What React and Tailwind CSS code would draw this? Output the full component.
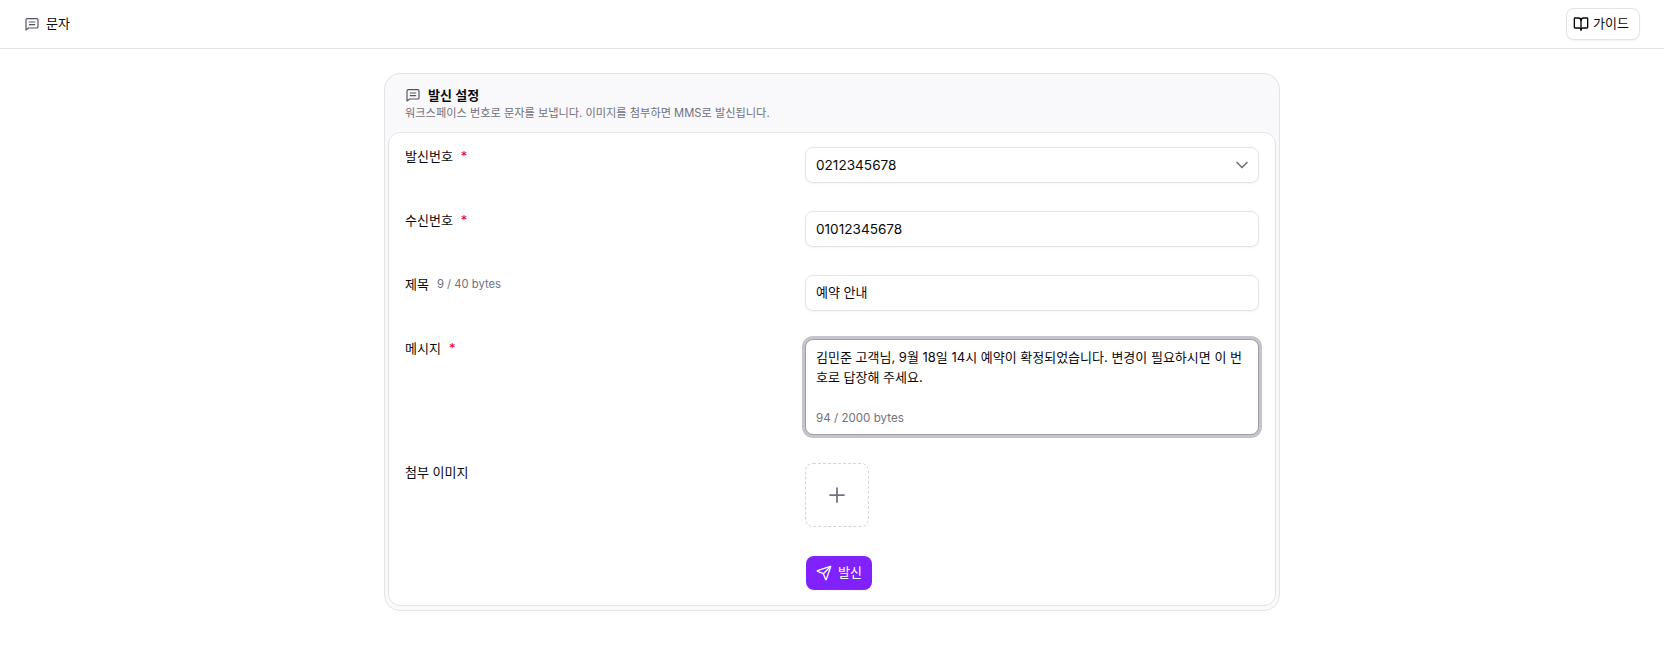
import { BookOpen, ChevronDown, Plus, Send } from "lucide-react";

const font = "font-['Inter','Noto_Sans_CJK_KR',sans-serif]";

function MessageIcon() {
  return (
    <svg viewBox="0 0 24 24" fill="none" stroke="currentColor" strokeWidth="1.75" strokeLinecap="round" strokeLinejoin="round" className="size-4 text-[#52525c]">
      <path d="M21 16a2 2 0 0 1-2 2H7l-4 3V6a2 2 0 0 1 2-2h14a2 2 0 0 1 2 2z" />
      <path d="M8 9h8" />
      <path d="M8 13h8" />
    </svg>
  );
}

function Field({ label, required, hint, children }) {
  return (
    <div className="grid grid-cols-[400px_454px] items-start">
      <div className="flex items-center text-[13px] leading-[18px] text-[#09090b]">
        <span>{label}</span>
        {required && <span className="ml-2 text-[#e7000b]">*</span>}
        {hint && <span className="ml-2 text-[11.25px] text-[#71717b]">{hint}</span>}
      </div>
      {children}
    </div>
  );
}

function TextBox({ children }) {
  return (
    <div className="flex h-9 items-center justify-between rounded-lg border border-[#e4e4e7] bg-white px-2.5 text-[13.6px] text-[#09090b] shadow-[0_1px_2px_rgba(0,0,0,0.05)]">
      {children}
    </div>
  );
}

export default function App() {
  return (
    <div className={`${font} min-h-[660px] bg-white`}>
      <header className="flex h-[49px] items-center justify-between border-b border-[#e4e4e7] px-6">
        <div className="flex items-center gap-1.5 text-[13px] text-[#09090b]">
          <MessageIcon />
          <span>문자</span>
        </div>
        <button className="flex h-8 items-center gap-1 rounded-lg border border-[#e4e4e7] bg-white pl-1.5 pr-2.5 text-[13px] text-[#09090b] shadow-[0_1px_2px_rgba(0,0,0,0.05)]">
          <BookOpen className="size-4" strokeWidth={2} />
          가이드
        </button>
      </header>

      <main className="flex justify-center pt-6">
        <section className="w-[896px] rounded-2xl border border-[#e4e4e7] bg-[#f9f9fb] px-[3px] pb-1">
          <div className="px-[17px] pb-[11px] pt-[11px]">
            <div className="flex items-center gap-[7px] text-[13px] leading-[20px] font-semibold text-[#09090b]">
              <MessageIcon />
              <span>발신 설정</span>
            </div>
            <p className="text-[11.2px] leading-4 text-[#71717b]">
              워크스페이스 번호로 문자를 보냅니다. 이미지를 첨부하면 MMS로 발신됩니다.
            </p>
          </div>

          <div className="flex flex-col gap-7 rounded-xl border border-[#e4e4e7] bg-white px-4 pb-[15px] pt-[14px]">
            <Field label="발신번호" required>
              <TextBox>
                <span>0212345678</span>
                <ChevronDown className="size-5 text-[#71717b] -mr-1" strokeWidth={2} />
              </TextBox>
            </Field>
            <Field label="수신번호" required>
              <TextBox>01012345678</TextBox>
            </Field>
            <Field label="제목" hint="9 / 40 bytes">
              <TextBox>
                <span className="text-[13px]">예약 안내</span>
              </TextBox>
            </Field>
            <Field label="메시지" required>
              <div className="flex h-24 flex-col justify-between rounded-lg border border-[#9f9fa9] bg-white px-2.5 pb-2 pt-[7px] text-[13px] leading-5 text-[#09090b] shadow-[0_0_0_3px_#c4c4cc]">
                <p className="break-all">김민준 고객님, 9월 18일 14시 예약이 확정되었습니다. 변경이 필요하시면 이 번호로 답장해 주세요.</p>
                <p className="text-[11.6px] leading-4 text-[#71717b]">94 / 2000 bytes</p>
              </div>
            </Field>
            <Field label="첨부 이미지">
              <div className="flex size-16 items-center justify-center rounded-lg border border-dashed border-[#d4d4d8] text-[#71717b]">
                <Plus className="size-6" strokeWidth={1.75} />
              </div>
            </Field>
            <div className="grid grid-cols-[400px_454px] pt-px">
              <div />
              <button className="ml-px flex h-[34px] w-[66px] items-center justify-center gap-[6px] rounded-lg bg-[#7f22fe] text-[13px] text-white">
                <Send className="size-4" strokeWidth={2} />
                발신
              </button>
            </div>
          </div>
        </section>
      </main>
    </div>
  );
}
